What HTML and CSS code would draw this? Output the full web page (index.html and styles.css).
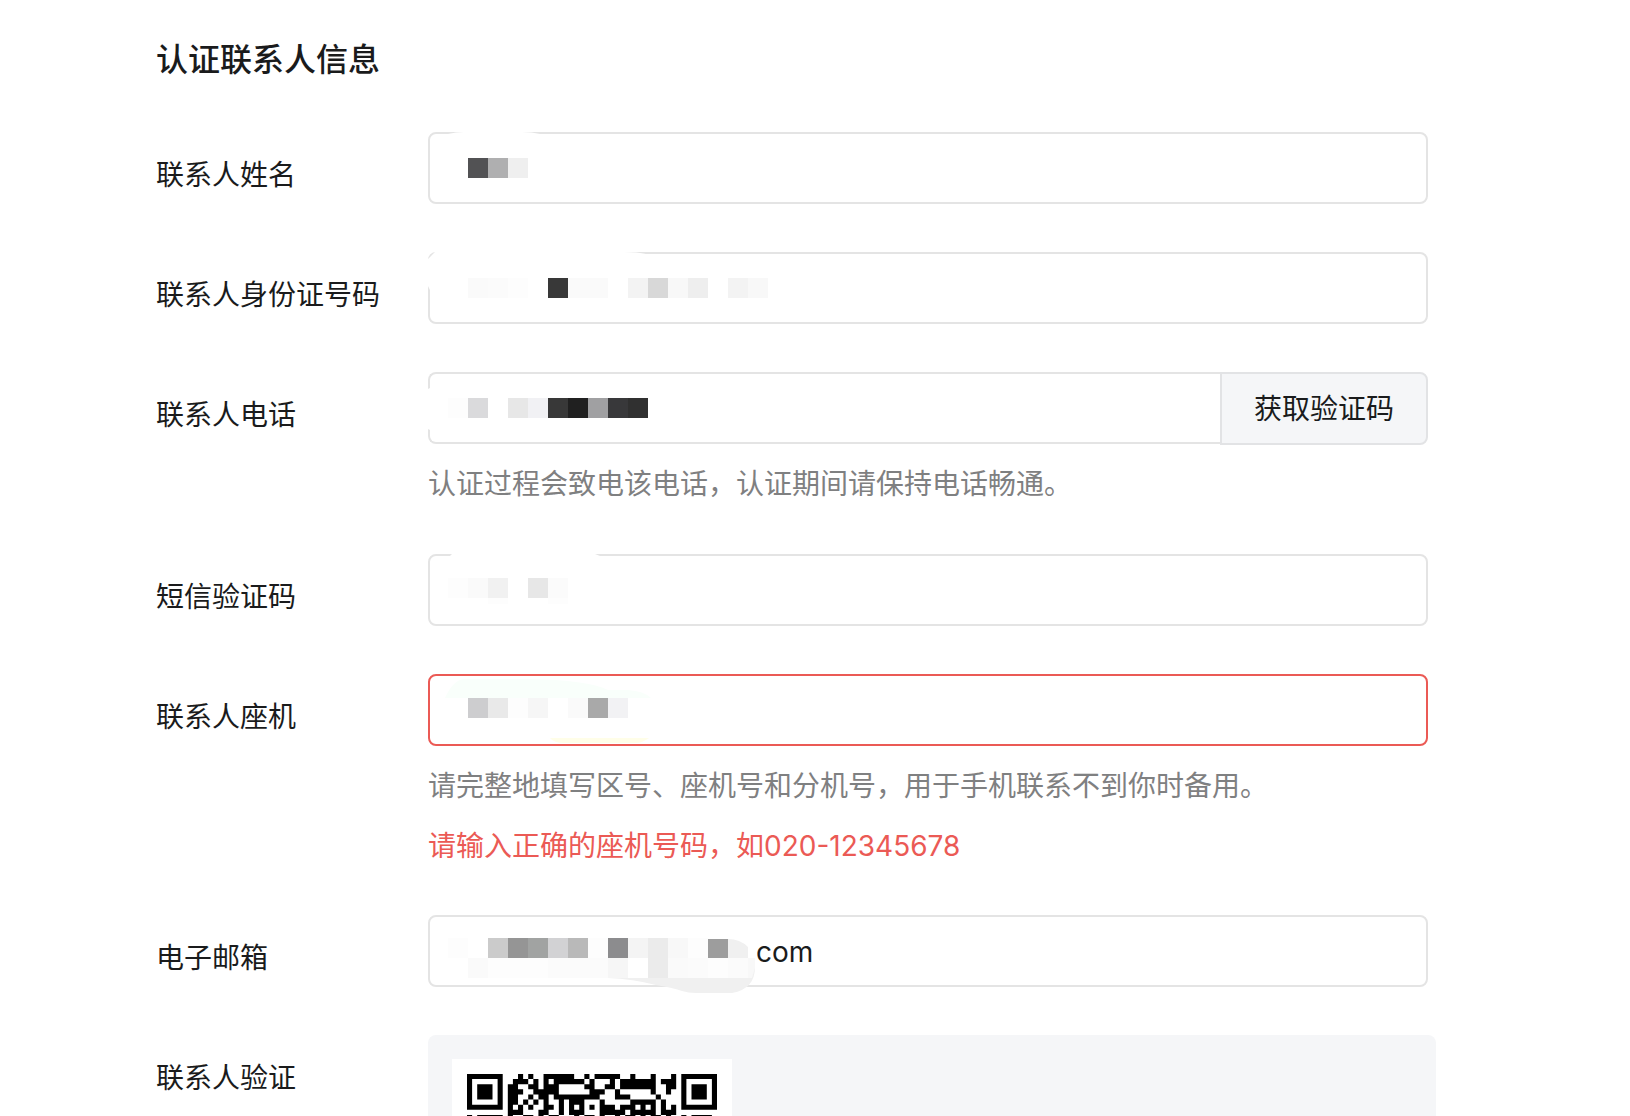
FILE: index.html
```html
<!DOCTYPE html>
<html lang="zh-CN">
<head>
  <meta charset="UTF-8" />
  <meta name="viewport" content="width=device-width, initial-scale=1" />
  <title>认证联系人信息</title>
  <link rel="stylesheet" href="styles.css">
</head>
<body>

  <form class="contact-form">
    <h2 class="form-title">认证联系人信息</h2>

    <!-- Name -->
    <div class="form-row">
      <label class="form-label" for="name">联系人姓名</label>
      <div class="form-field">
        <input class="form-input" type="text" id="name" />
        <svg class="mosaic" width="420" height="84" viewBox="0 0 420 84" aria-hidden="true">
          <path fill="#fff" d="M20 2Q28 0 36 0H94Q104 0 112 2Z" />
          <path fill="#525254" d="M40 26h20v20h-20z" />
          <path fill="#afafb0" d="M60 26h20v20h-20z" />
          <path fill="#efefef" d="M80 26h20v20h-20z" />
        </svg>
      </div>
    </div>

    <!-- ID number -->
    <div class="form-row">
      <label class="form-label" for="idNumber">联系人身份证号码</label>
      <div class="form-field">
        <input class="form-input" type="text" id="idNumber" />
        <svg class="mosaic" width="420" height="84" viewBox="0 0 420 84" aria-hidden="true">
          <path fill="#fff" d="M7 0H196Q210 0 218 2V6H6L2 12V38L0 34V7Z" />
          <path fill="#fafafa" d="M40 26h20v20h-20zM140 26h40v20h-40z" />
          <path fill="#fbfbfb" d="M60 26h20v20h-20z" />
          <path fill="#fdfdfd" d="M80 26h20v20h-20z" />
          <path fill="#383838" d="M120 26h20v20h-20z" />
          <path fill="#f3f3f3" d="M200 26h20v20h-20zM300 26h20v20h-20z" />
          <path fill="#d8d8d8" d="M220 26h20v20h-20z" />
          <path fill="#f8f8f8" d="M240 26h20v20h-20zM320 26h20v20h-20z" />
          <path fill="#eeeeee" d="M260 26h20v20h-20z" />
        </svg>
      </div>
    </div>

    <!-- Phone -->
    <div class="form-row">
      <label class="form-label" for="phone">联系人电话</label>
      <div class="form-field">
        <div class="input-group">
          <input class="form-input" type="tel" id="phone" />
          <button class="code-btn" type="button">获取验证码</button>
        </div>
        <svg class="mosaic" width="420" height="84" viewBox="0 0 420 84" aria-hidden="true">
          <path fill="#fff" d="M0 17L2 16V58L0 57Z" />
          <path fill="#fdfdfd" d="M20 26h20v20h-20z" />
          <path fill="#dadadc" d="M40 26h20v20h-20z" />
          <path fill="#e7e7e7" d="M80 26h20v20h-20z" />
          <path fill="#f1f1f4" d="M100 26h20v20h-20z" />
          <path fill="#383838" d="M120 26h20v20h-20z" />
          <path fill="#202020" d="M140 26h20v20h-20z" />
          <path fill="#a0a0a2" d="M160 26h20v20h-20z" />
          <path fill="#38383a" d="M180 26h20v20h-20z" />
          <path fill="#303030" d="M200 26h20v20h-20z" />
        </svg>
        <p class="hint">认证过程会致电该电话，认证期间请保持电话畅通。</p>
      </div>
    </div>

    <!-- SMS code -->
    <div class="form-row">
      <label class="form-label" for="smsCode">短信验证码</label>
      <div class="form-field">
        <input class="form-input" type="text" id="smsCode" />
        <svg class="mosaic" width="420" height="84" viewBox="0 0 420 84" aria-hidden="true">
          <path fill="#fff" d="M24 0H167L172 2H22Z" />
          <path fill="#fdfdfd" d="M20 24h20v20h-20zM60 44h20v6h-20zM120 44h20v6h-20z" />
          <path fill="#fafafa" d="M40 24h20v20h-20z" />
          <path fill="#f1f1f1" d="M60 24h20v20h-20z" />
          <path fill="#e7e7e7" d="M100 24h20v20h-20z" />
          <path fill="#fbfbfb" d="M120 24h20v20h-20z" />
        </svg>
      </div>
    </div>

    <!-- Landline -->
    <div class="form-row">
      <label class="form-label" for="landline">联系人座机</label>
      <div class="form-field">
        <input class="form-input is-error" type="tel" id="landline" aria-describedby="landlineHint landlineError" />
        <svg class="mosaic" width="420" height="84" viewBox="0 0 420 84" aria-hidden="true">
          <path fill="#f9fffb" d="M17 24Q25 6 36 5H100Q160 6 180 16H200Q216 17 223 24Z" />
          <path fill="#fffee8" d="M122 64H221Q214 69 208 69H136Q126 69 122 64Z" />
          <path fill="#cdcdcf" d="M40 24h20v20h-20z" />
          <path fill="#e9e9e9" d="M60 24h20v20h-20z" />
          <path fill="#fdfdfd" d="M80 24h20v20h-20z" />
          <path fill="#f6f6f6" d="M100 24h20v20h-20z" />
          <path fill="#fafafa" d="M140 24h20v20h-20z" />
          <path fill="#a9a9a9" d="M160 24h20v20h-20z" />
          <path fill="#f2f2f4" d="M180 24h20v20h-20z" />
        </svg>
        <p class="hint" id="landlineHint">请完整地填写区号、座机号和分机号，用于手机联系不到你时备用。</p>
        <p class="error" id="landlineError">请输入正确的座机号码，如020-12345678</p>
      </div>
    </div>

    <!-- Email -->
    <div class="form-row">
      <label class="form-label" for="email">电子邮箱</label>
      <div class="form-field">
        <input class="form-input email-input" type="text" id="email" value="com" />
        <svg class="mosaic" width="420" height="84" viewBox="0 0 420 84" aria-hidden="true">
          <path fill="#f0f0f0" d="M40 63H180Q205 64 228 70Q246 73 254 76Q260 78 268 78H304Q327 74 327 52V43H320V32Q312 24 300 24H280V60H40Z" />
          <path fill="#fdfdfd" d="M20 23h20v20h-20zM60 43h60v20h-60zM260 23h20v20h-20zM280 43h20v20h-20zM160 23h20v20h-20z" />
          <path fill="#fafafa" d="M40 43h20v20h-20zM240 43h20v20h-20z" />
          <path fill="#cbcbcb" d="M60 23h20v20h-20z" />
          <path fill="#959595" d="M80 23h20v20h-20z" />
          <path fill="#a1a3a2" d="M100 23h20v20h-20z" />
          <path fill="#d2d2d4" d="M120 23h20v20h-20z" />
          <path fill="#b9b9b9" d="M140 23h20v20h-20z" />
          <path fill="#8c8c8e" d="M180 23h20v20h-20z" />
          <path fill="#f4f4f4" d="M200 23h20v20h-20z" />
          <path fill="#ebebeb" d="M220 23h20v40h-20z" />
          <path fill="#f8f8f8" d="M240 23h20v20h-20zM320 43h7v10l-3 10h-4z" />
          <path fill="#9d9d9d" d="M280 24h20v19h-20z" />
          <path fill="#fbfbfb" d="M120 43h60v20h-60zM260 43h20v20h-20zM300 43h20v20h-20z" />
          <path fill="#f6f6f6" d="M180 43h20v20h-20z" />
          <path fill="#fff" d="M200 43h20v20h-20z" />
        </svg>
      </div>
    </div>

    <!-- QR code -->
    <div class="form-row">
      <span class="form-label">联系人验证</span>
      <div class="qr-panel">
        <div class="qr-card">
          <svg class="qr-code" id="qrCode" width="250" height="42" viewBox="0 0 49 8.2" preserveAspectRatio="none" role="img" aria-label="二维码"></svg>
        </div>
      </div>
    </div>
  </form>

  <script>
    const qrRows = [
      "#######   # #  ######  # #####  #   #   # #######",
      "#     #  ### # # ###### #   # ####### ### #     #",
      "# ### # ##  ## ###     ##  ## #######  ## # ### #",
      "# ### # ###  #####      ###  #      #  #  # ### #",
      "# ### # ##  # ## #########   ###     #    # ### #",
      "#     # ## # # #  # ###   #     ##### #   #     #",
      "####### # # #  ## # # # # ### ### # # # # #######",
      "        ###   ##  # ###   ##### ##### ###        ",
      "# ##### #  ## # ##   # ## #  # ## # ## #  # #### "
    ];

    const qrCode = document.getElementById("qrCode");
    let d = "";
    qrRows.forEach((row, y) => {
      for (const run of row.matchAll(/#+/g)) {
        d += `M${run.index} ${y}h${run[0].length}v1h-${run[0].length}z`;
      }
    });
    const path = document.createElementNS("http://www.w3.org/2000/svg", "path");
    path.setAttribute("d", d);
    qrCode.appendChild(path);
  </script>

</body>
</html>
```

FILE: styles.css
```css
* {
  box-sizing: border-box;
}

body {
  margin: 0;
  font-family: Inter, "Noto Sans CJK SC", sans-serif;
  font-size: 28px;
  line-height: 44px;
  background: #fff;
  color: #1a1b1c;
}

.contact-form {
  padding: 37px 202px 0 156px;
}

.form-title {
  margin: 0 0 49px;
  font-size: 32px;
  line-height: 46px;
  font-weight: 500;
}

.form-row {
  display: flex;
  align-items: flex-start;
  margin-bottom: 48px;
}

.form-row:last-child {
  margin-bottom: 0;
}

.form-label {
  flex: 0 0 272px;
  padding-top: 21px;
}

.form-field {
  position: relative;
  flex: 1;
  min-width: 0;
}

.form-input {
  display: block;
  width: 100%;
  height: 72px;
  padding: 2px 20px 0;
  border: 2px solid #e4e4e4;
  border-radius: 8px;
  background: #fff;
  color: inherit;
  font: inherit;
  outline: none;
}

.form-input.is-error {
  border-color: #eb5a55;
}

.email-input {
  padding-left: 326px;
}

.input-group {
  display: flex;
  height: 72px;
}

.input-group .form-input {
  flex: 1;
  min-width: 0;
  border-right: none;
  border-radius: 8px 0 0 8px;
}

.code-btn {
  flex: 0 0 208px;
  height: 73px;
  padding: 0;
  border: 2px solid #e2e3e5;
  border-radius: 0 8px 8px 0;
  background: #f5f6f8;
  color: inherit;
  font: inherit;
  cursor: pointer;
}

/* blocks that hide the private values */
.mosaic {
  position: absolute;
  top: 0;
  left: 0;
  pointer-events: none;
}

.hint {
  margin: 18px 0 0;
  color: #7f8081;
}

.error {
  margin: 17px 0 0;
  line-height: 42px;
  color: #eb5a55;
}

.qr-panel {
  flex: 1;
  margin-right: -8px;
  padding: 24px 24px 0;
  border-radius: 8px 8px 0 0;
  background: #f5f6f8;
}

.qr-card {
  width: 280px;
  padding: 15px 15px 0;
  background: #fff;
}

.qr-code {
  display: block;
}
```
